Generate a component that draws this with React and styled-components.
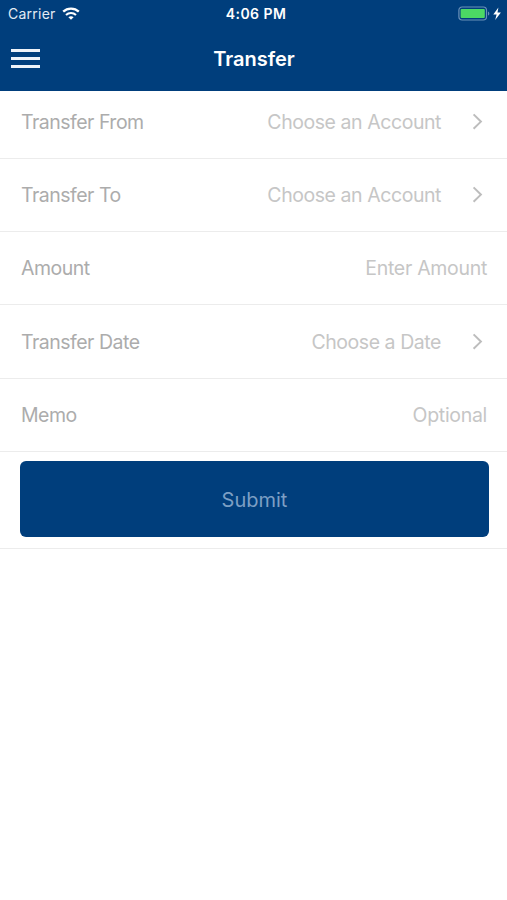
import React from 'react';
import styled, { createGlobalStyle } from 'styled-components';

const rows = [
  { label: 'Transfer From', value: 'Choose an Account', arrow: true, height: 68, lift: 6 },
  { label: 'Transfer To', value: 'Choose an Account', arrow: true, height: 73 },
  { label: 'Amount', value: 'Enter Amount', height: 73 },
  { label: 'Transfer Date', value: 'Choose a Date', arrow: true, height: 74 },
  { label: 'Memo', value: 'Optional', height: 73 },
];

const StatusBar = () => {
  return (
    <StyledStatusBar>
      <div className='carrier'>
        <span>Carrier</span>
        <svg width='18' height='13' viewBox='0 0 18 13' fill='none'>
          <path d='M1.2 4.7C5.5 0.6 12.5 0.6 16.8 4.7' stroke='#fff' strokeWidth='2.3' />
          <path d='M4 7.9C6.8 5.3 11.2 5.3 14 7.9' stroke='#fff' strokeWidth='2.1' />
          <path d='M9 12.8L6.4 10.2C7.8 8.9 10.2 8.9 11.6 10.2Z' fill='#fff' />
        </svg>
      </div>
      <div className='time'>4:06 PM</div>
      <div className='battery'>
        <svg width='44' height='16' viewBox='0 0 44 16' fill='none'>
          <rect x='0.9' y='1' width='27.6' height='13' rx='3.2' stroke='#6a91b8' strokeWidth='1.2' />
          <rect x='2.6' y='3' width='24.2' height='9' rx='1' fill='#4cd964' />
          <path d='M30 5.4C31.8 6 31.8 9 30 9.6Z' fill='#6a91b8' />
          <path d='M40.4 1.5L35.3 8.6H38.6L37.2 14.1L42.9 6.6H39.5Z' fill='#fff' />
        </svg>
      </div>
    </StyledStatusBar>
  );
};

const Row = ({ label, value, arrow, height, lift }) => {
  return (
    <StyledRow $height={height} $lift={lift} $arrow={arrow}>
      <div className='label'>{label}</div>
      <div className='value'>{value}</div>
      {arrow && (
        <svg width='12' height='18' viewBox='0 0 12 18' fill='none'>
          <path d='M1.6 1.4L8.9 8.6L1.6 15.8' stroke='#bdbdbd' strokeWidth='2' />
        </svg>
      )}
    </StyledRow>
  );
};

const App = () => {
  return (
    <StyledApp>
      <GlobalStyle />
      <StyledHeader>
        <StatusBar />
        <StyledNav>
          <StyledMenu>
            <span />
            <span />
            <span />
          </StyledMenu>
          <h1>Transfer</h1>
        </StyledNav>
      </StyledHeader>
      {rows.map(row => (
        <Row key={row.label} {...row} />
      ))}
      <StyledFooter>
        <StyledButton>Submit</StyledButton>
      </StyledFooter>
    </StyledApp>
  );
};

const GlobalStyle = createGlobalStyle`
  * {
    box-sizing: border-box;
  }
  body {
    margin: 0;
    background: #fff;
    font-family: Inter, 'Liberation Sans', sans-serif;
  }
`;

const StyledApp = styled.div`
  width: 100%;
  min-height: 900px;
  background: #fff;
`;

const StyledHeader = styled.div`
  height: 91px;
  background: #003e7c;
  color: #fff;
`;

const StyledStatusBar = styled.div`
  height: 27px;
  padding: 0 5px 0 8px;
  display: grid;
  grid-template-columns: 1fr auto 1fr;
  align-items: center;
  font-size: 14px;
  .carrier {
    display: flex;
    align-items: center;
    gap: 6px;
    letter-spacing: 0.25px;
    color: #e3ebf4;
  }
  .time {
    padding-left: 2px;
    font-weight: 600;
    letter-spacing: 0.45px;
  }
  .battery {
    display: flex;
    justify-content: flex-end;
  }
  svg {
    display: block;
  }
`;

const StyledNav = styled.div`
  height: 64px;
  padding: 0 11px;
  display: grid;
  grid-template-columns: 1fr auto 1fr;
  align-items: center;
  h1 {
    margin: 0;
    padding-left: 1px;
    font-size: 20px;
    font-weight: 600;
  }
`;

const StyledMenu = styled.div`
  width: 29px;
  padding-bottom: 2px;
  display: flex;
  flex-direction: column;
  gap: 5px;
  span {
    height: 3px;
    background: #eef3f9;
  }
`;

const StyledRow = styled.div`
  height: ${props => props.$height}px;
  padding: 0 20px ${props => props.$lift || 0}px 21px;
  display: flex;
  align-items: center;
  border-bottom: 1px solid #ececec;
  font-size: 19.5px;
  letter-spacing: -0.5px;
  .label {
    flex: 1;
    color: #acacac;
  }
  .value {
    color: #c6c6c6;
    letter-spacing: ${props => (props.$arrow ? '-0.44px' : '-0.3px')};
  }
  svg {
    margin-left: 31px;
    margin-right: 3px;
  }
`;

const StyledFooter = styled.div`
  height: 97px;
  padding: 9px 18px 0 20px;
  border-bottom: 1px solid #ececec;
`;

const StyledButton = styled.button`
  display: block;
  width: 100%;
  height: 76px;
  padding: 2px 0 0;
  border: none;
  border-radius: 6px;
  background: #003e7c;
  color: #7c9fc4;
  font-family: inherit;
  font-size: 20px;
`;

export default App;
